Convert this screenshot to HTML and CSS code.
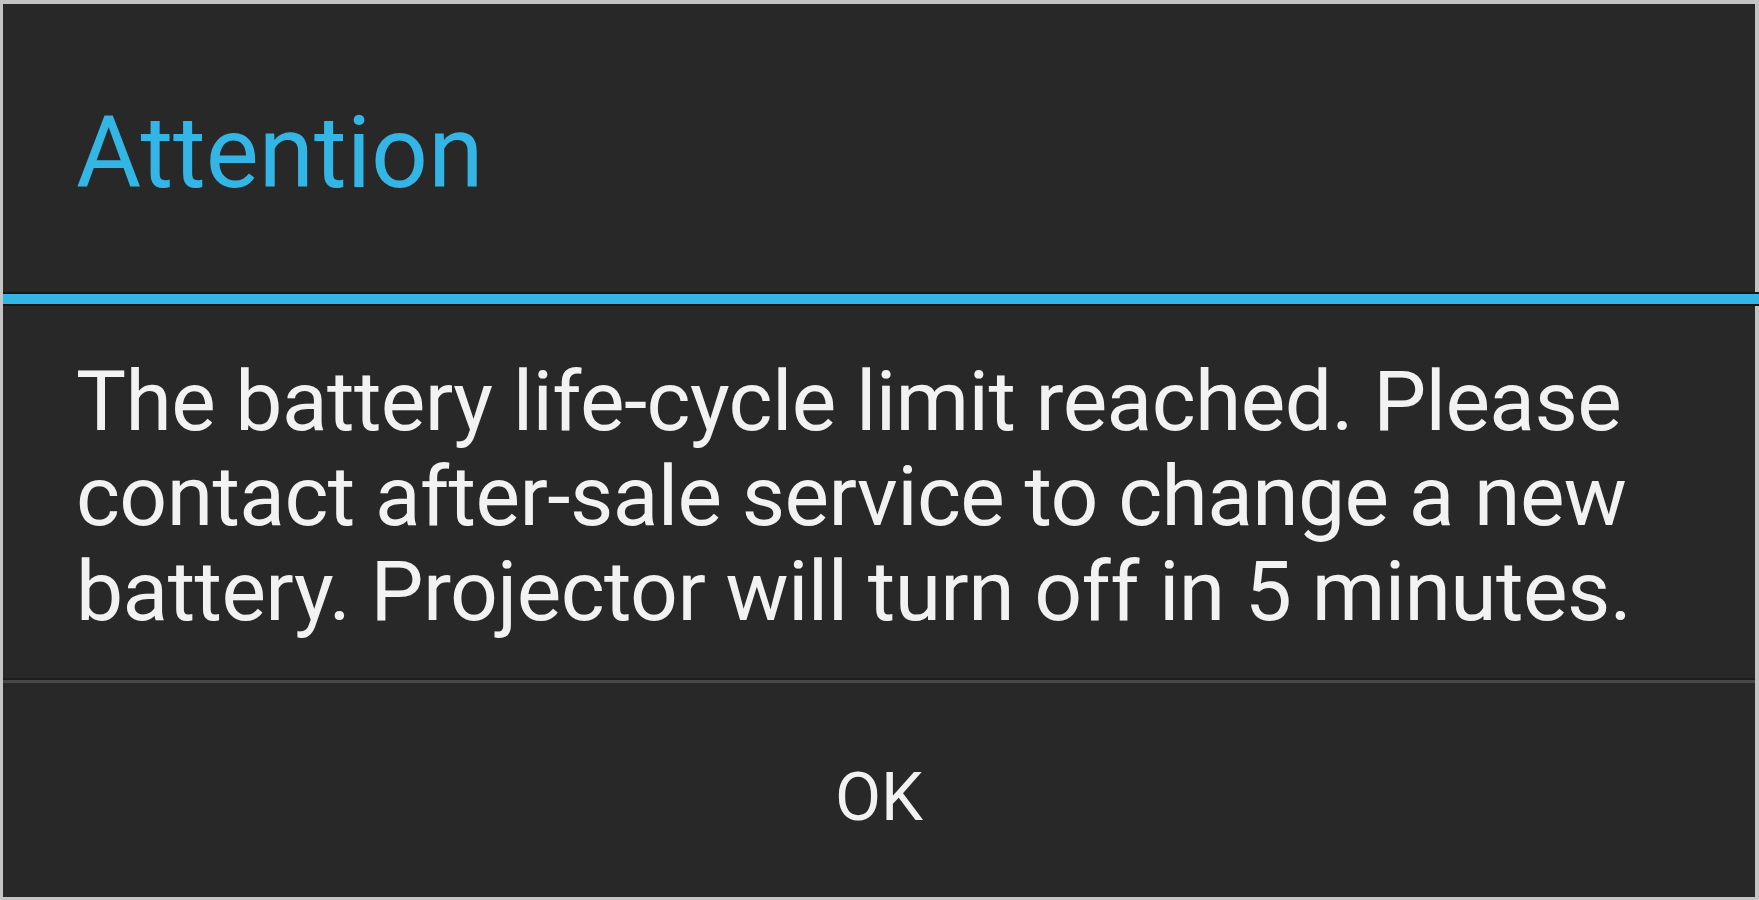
FILE: index.html
```html
<!DOCTYPE html>
<html lang="en">
<head>
<meta charset="utf-8">
<title>Attention</title>
<link rel="stylesheet" href="styles.css">
</head>
<body>
<div class="dialog">
  <div class="title-bar">
    <h1 class="title">Attention</h1>
  </div>
  <div class="title-rule"></div>
  <div class="message">
    <p>The battery life-cycle limit reached. Please contact after-sale service to change a new battery. Projector will turn off in 5 minutes.</p>
  </div>
  <div class="button-bar">
    <button class="button" type="button">OK</button>
  </div>
</div>
</body>
</html>
```
FILE: styles.css
```css
html, body {
  margin: 0;
  padding: 0;
}

body {
  width: 1759px;
  height: 900px;
  overflow: hidden;
  background: #c4c4c4;
  font-family: Roboto, "Noto Sans", "Liberation Sans", sans-serif;
}

.dialog {
  margin: 4px 4px 0 3px;
  height: 893px;
  background: #282828;
  display: flex;
  flex-direction: column;
}

.title-bar {
  flex-shrink: 0;
  height: 288px;
  box-sizing: border-box;
  padding: 99px 0 0 73px;
}

.title {
  margin: 0;
  font-size: 100px;
  line-height: 1;
  font-weight: 400;
  color: #33b5e5;
}

.title-rule {
  flex-shrink: 0;
  height: 10px;
  background: #33b5e5;
  border-top: 2px solid #1a1712;
  border-bottom: 2px solid #1a1712;
  margin-right: -4px;
}

.message {
  flex-shrink: 0;
  padding: 48px 30px 41px 73px;
  border-bottom: 3px solid #474747;
  box-shadow: 0 -2px 0 #1e1e1e inset;
}

.message p {
  margin: 0;
  font-size: 84px;
  line-height: 95px;
  letter-spacing: -0.6px;
  color: #f2f2f2;
}

.button-bar {
  flex: 1;
  display: flex;
  justify-content: center;
  align-items: flex-start;
  padding-top: 81px;
}

.button {
  background: none;
  border: 0;
  padding: 0;
  font-family: inherit;
  font-size: 67px;
  line-height: 1;
  color: #f2f2f2;
}
```
